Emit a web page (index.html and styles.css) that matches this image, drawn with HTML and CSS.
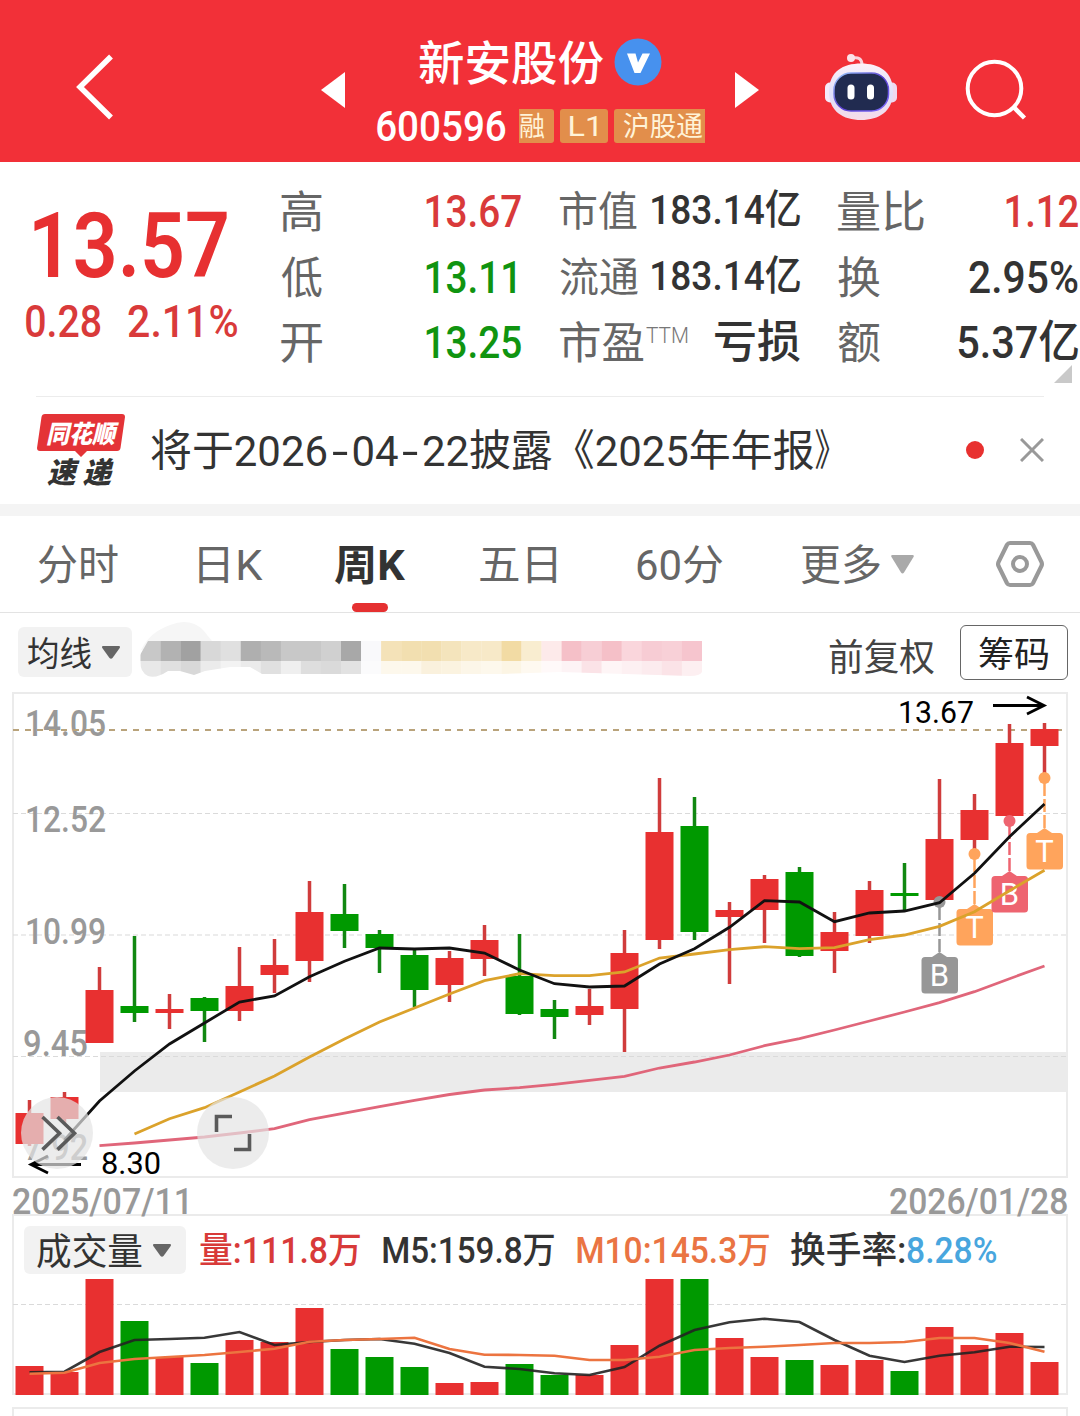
FILE: index.html
```html
<!DOCTYPE html>
<html lang="zh-CN">
<head>
<meta charset="utf-8">
<title>新安股份 600596</title>
<link rel="stylesheet" href="styles.css">
</head>
<body>
<header class="topbar">
  <svg class="back" width="44" height="72" viewBox="0 0 44 72"><path d="M37 5.500 6 36 37 66.500" fill="none" stroke="#fff" stroke-width="5.5"/></svg>
  <svg class="prev" width="24" height="36" viewBox="0 0 24 36"><path d="M24 0v36L0 18z" fill="#fff"/></svg>
  <div class="stock">
    <div class="stock-name">
      <span class="fit" data-w="184">新安股份</span>
      <svg class="verified" width="48" height="48" viewBox="0 0 48 48"><circle cx="24" cy="24" r="23.5" fill="#4791ee"/><path d="M13 15.500h8.500l2.500 9 4.500-9H36L26.500 35h-6z" fill="#fff"/></svg>
    </div>
    <div class="stock-code">
      <span class="fit code" data-w="129">600596</span>
      <span class="tag tag-first"><span class="fit" data-w="25">融</span></span>
      <span class="tag tag-l1"><span class="fit" data-w="27">L1</span></span>
      <span class="tag tag-last"><span class="fit" data-w="79">沪股通</span></span>
    </div>
  </div>
  <svg class="next" width="24" height="36" viewBox="0 0 24 36"><path d="M0 0v36l24-18z" fill="#fff"/></svg>
  <svg class="robot" width="76" height="70" viewBox="823 52 76 70">
    <defs>
      <linearGradient id="shell" x1="0" y1="0" x2="0" y2="1"><stop offset="0" stop-color="#fdf1f8"/><stop offset=".55" stop-color="#dfe0fb"/><stop offset="1" stop-color="#f7dbe8"/></linearGradient>
      <linearGradient id="rim" x1="0" y1="0" x2="1" y2="1"><stop offset="0" stop-color="#9fd0ff"/><stop offset=".5" stop-color="#5a3fd0"/><stop offset="1" stop-color="#7d6bff"/></linearGradient>
    </defs>
    <path d="M852 58q10-2 10 7" fill="none" stroke="#f9d3dc" stroke-width="3"/>
    <circle cx="851" cy="58" r="4" fill="#fbe3e9"/>
    <rect x="825" y="82.500" width="11" height="20" rx="5" fill="#f5eafa"/>
    <rect x="886" y="82.500" width="11" height="20" rx="5" fill="#efd9ef"/>
    <path d="M861 63.500c18 0 32 8 32 28s-14 28.500-32 28.500-32-8.500-32-28.500 14-28 32-28z" fill="url(#shell)"/>
    <rect x="834" y="73" width="54.500" height="38" rx="17" fill="#212b50" stroke="url(#rim)" stroke-width="1.500"/>
    <rect x="847.500" y="84.500" width="7" height="15" rx="3.500" fill="#fff"/>
    <rect x="867" y="84.500" width="7" height="15" rx="3.500" fill="#fff"/>
  </svg>
  <svg class="search" width="64" height="64" viewBox="964 58 64 64"><circle cx="994.500" cy="88.500" r="26.800" fill="none" stroke="#fff" stroke-width="4"/><path d="M1014 107.500l10.500 10.500" stroke="#fff" stroke-width="4.500"/></svg>
</header>

<section class="quote">
  <div class="price">
    <span class="fit last" data-w="193">13.57</span>
    <div class="change"><span class="fit" data-w="75">0.28</span><span class="fit" data-w="109">2.11%</span></div>
  </div>
  <div class="stats">
    <div><span class="fit label" data-w="41">高</span><span class="fit num up" data-w="95">13.67</span></div>
    <div><span class="fit label" data-w="41">低</span><span class="fit num down low" data-w="89">13.11</span></div>
    <div><span class="fit label" data-w="41">开</span><span class="fit num down" data-w="95">13.25</span></div>
  </div>
  <div class="stats">
    <div class="compact"><span class="fit label" data-w="77">市值</span><span class="fit num" data-w="148">183.14亿</span></div>
    <div class="compact"><span class="fit label" data-w="78">流通</span><span class="fit num" data-w="148">183.14亿</span></div>
    <div><span class="fit label" data-w="84">市盈</span><span class="fit ttm" data-w="42">TTM</span><span class="fit num" data-w="85">亏损</span></div>
  </div>
  <div class="stats">
    <div><span class="fit label" data-w="86">量比</span><span class="fit num up" data-w="72">1.12</span></div>
    <div><span class="fit label" data-w="42">换</span><span class="fit num" data-w="109">2.95%</span></div>
    <div><span class="fit label" data-w="42">额</span><span class="fit num" data-w="120">5.37亿</span></div>
    <svg class="corner" width="18" height="18" viewBox="0 0 18 18"><path d="M18 0v18H0z" fill="#c9c9c9"/></svg>
  </div>
</section>

<section class="news">
  <div class="news-logo">
    <svg class="logo-bg" width="88" height="44" viewBox="0 0 88 44"><path d="M8 0h77q3 0 3 3l-4.500 31q-.5 3-3.500 3H50l-6 6-6-6H3q-3 0-3-3L4.500 3q.5-3 3.500-3z" fill="#e43337"/></svg>
    <span class="fit logo-top" data-w="68">同花顺</span>
    <span class="fit logo-bottom" data-w="64">速 递</span>
  </div>
  <span class="fit news-text" data-w="684">将于2026<i>-</i>04<i>-</i>22披露《2025年年报<b>》</b></span>
  <span class="dot"></span>
  <svg class="close" width="24" height="24" viewBox="0 0 24 24"><path d="M1 1l22 22M23 1 1 23" stroke="#999" stroke-width="3"/></svg>
</section>

<nav class="tabs">
  <span class="fit t1" data-w="80">分时</span>
  <span class="fit t2" data-w="64">日K</span>
  <span class="tab-active t3"><span class="fit" data-w="71">周K</span></span>
  <span class="fit t4" data-w="76">五日</span>
  <span class="fit t5" data-w="86">60分</span>
  <span class="fit t6" data-w="79">更多</span>
  <svg class="more" width="23" height="19" viewBox="0 0 23 19"><path d="M1.500 0h20q2 0 1 2L13 17.500q-1.500 2-3 0L.5 2q-1-2 1-2z" fill="#a9a9a9"/></svg>
  <svg class="setting" width="50" height="48" viewBox="0 0 50 48"><path d="M15 3h20q2 0 3 1.700L46.500 22q.8 2 0 4L38 43.300Q37 45 35 45H15q-2 0-3-1.700L3.500 26q-.8-2 0-4L12 4.700Q13 3 15 3z" fill="none" stroke="#999" stroke-width="4.200"/><circle cx="25" cy="24" r="7" fill="none" stroke="#999" stroke-width="4"/></svg>
</nav>

<section class="tools">
  <div class="select ma"><span class="fit" data-w="63">均线</span><svg width="18" height="13" viewBox="0 0 18 13"><path d="M1 0h16q1.500.3.700 2l-7.200 10q-1.500 1.500-3 0L.3 2Q-.5.3 1 0z" fill="#666"/></svg></div>
  <svg class="mosaic" id="mosaic" width="570" height="62" viewBox="136 618 570 62"></svg>
  <span class="fit adjust" data-w="105">前复权</span>
  <div class="chips"><span class="fit" data-w="69">筹码</span></div>
</section>

<svg class="kline" id="kline" width="1080" height="500" viewBox="0 684 1080 500"></svg>

<div class="dates"><span class="fit" data-w="174">2025/07/11</span><span class="fit" data-w="177">2026/01/28</span></div>

<section class="volume">
  <div class="legend">
    <div class="select vol"><span class="fit" data-w="105">成交量</span><svg width="18" height="13" viewBox="0 0 18 13"><path d="M1 0h16q1.500.3.700 2l-7.200 10q-1.500 1.500-3 0L.3 2Q-.5.3 1 0z" fill="#666"/></svg></div>
    <span class="fit v1" data-w="160">量:111.8万</span>
    <span class="fit v2" data-w="171">M5:159.8万</span>
    <span class="fit v3" data-w="192">M10:145.3万</span>
    <span class="fit v4" data-w="114">换手率:</span>
    <span class="fit v5" data-w="89">8.28%</span>
  </div>
  <svg class="bars" id="bars" width="1054" height="120" viewBox="13 1276 1054 120"></svg>
</section>
<section class="next-panel"></section>
<script src="app.js"></script>
</body>
</html>
```
FILE: styles.css
```css
* { box-sizing: border-box; }
body {
  margin: 0;
  width: 1080px;
  height: 1416px;
  overflow: hidden;
  background: #fff;
  color: #333;
  font-family: Roboto, "Noto Sans CJK SC", sans-serif;
}
svg { display: block; flex: none; }
.fit { display: block; flex: none; white-space: nowrap; }
.fit > span { display: inline-block; transform-origin: 0 50%; }

.topbar { display: flex; align-items: flex-start; height: 162px; background: #f23038; color: #fff; }
.back { margin: 51px 0 0 74px; }
.prev { margin: 72px 0 0 203px; }
.stock { width: 329px; margin: 38px 0 0 31px; }
.stock-name { display: flex; height: 71px; padding-left: 43px; font-size: 47px; line-height: 52px; font-weight: 500; }
.verified { margin-left: 11px; }
.stock-code { display: flex; height: 34px; line-height: 36px; }
.code { font-size: 42px; font-weight: 500; margin: 0 12.500px 0 1px; }
.tag { display: block; height: 34px; background: #e28e4b; color: #fff3d8; font-size: 27px; line-height: 36px; border-radius: 3px; }
.tag-first { width: 35px; padding-left: 1px; margin-right: 6.500px; border-radius: 0 3px 3px 0; }
.tag-l1 { width: 48px; padding-left: 10px; margin-right: 6px; }
.tag-last { width: 91px; padding-left: 10px; border-radius: 3px 0 0 3px; }
.next { margin: 72px 0 0 30px; }
.robot { margin: 52px 0 0 64px; }
.search { margin: 58px 0 0 65px; }

.quote { display: flex; height: 234px; padding-top: 16px; }
.price { flex: none; width: 281px; padding: 35px 0 0 34px; color: #e73031; }
.last { font-size: 90px; line-height: 68px; font-weight: 600; }
.change { display: flex; gap: 27px; margin: 19px 0 0 -8px; font-size: 44.500px; line-height: 44px; font-weight: 500; color: #d93a3a; }
.stats { flex: none; width: 240px; margin-right: 38.500px; }
.stats:last-child { margin-right: 0; }
.stats > div { display: flex; justify-content: space-between; height: 65.500px; line-height: 67px; }
.label { font-size: 44px; color: #666; font-weight: 400; line-height: 70px; }
.num { font-size: 45px; font-weight: 500; }
.stats > .compact { line-height: 65px; }
.compact .label { font-size: 41px; line-height: 68px; }
.compact .num { font-size: 41px; }
.low { margin-right: 6px; }
.ttm { font-size: 22px; line-height: 54px; color: #777; font-weight: 300; margin-right: 24px; }
.up { color: #d93a3a; }
.down { color: #109410; }
.corner { margin: -10px 0 0 216px; }

.news { display: flex; align-items: flex-start; height: 120px; border-bottom: 12px solid #f4f4f4; background: linear-gradient(#ececec, #ececec) 36px 0 / 1008px 1px no-repeat; }
.news-logo { position: relative; width: 88px; height: 76px; margin: 18px 0 0 37px; font-weight: 900; font-style: italic; }
.logo-bg { position: absolute; left: 0; top: 0; }
.logo-top { position: relative; margin-left: 10px; font-size: 25px; line-height: 41px; color: #fff; }
.logo-bottom { margin: 0 0 0 10px; font-size: 29px; line-height: 36px; }
.news-text { margin: 28px 0 0 26px; font-size: 43px; line-height: 55px; font-weight: 400; }
.news-text i { display: inline-block; width: 24px; text-align: center; font-style: normal; transform: scaleX(1.400); }
.news-text b { display: inline-block; font-weight: 400; transform: scaleX(.750); transform-origin: 0 50%; }
.dot { width: 18px; height: 18px; margin: 45px 0 0 131px; border-radius: 50%; background: #e8302f; }
.close { margin: 42px 0 0 36px; }

.tabs { display: flex; align-items: flex-start; height: 97px; border-bottom: 1px solid #e3e3e3; color: #666; font-size: 42px; line-height: 100px; }
.t1 { margin-left: 37.500px; }
.t2 { margin-left: 81.500px; }
.t3 { margin-left: 71px; }
.t4 { margin-left: 75px; }
.t5 { margin-left: 81px; }
.t6 { margin-left: 78px; }
.tab-active { position: relative; color: #333; font-weight: 700; }
.tab-active::after { content: ""; position: absolute; left: 18px; top: 87px; width: 36px; height: 9px; border-radius: 5px; background: #e53031; }
.more { margin: 39px 0 0 11px; }
.setting { margin: 24px 0 0 81px; }

.tools { display: flex; align-items: flex-start; height: 71px; }
.select { display: flex; align-items: center; background: #f2f2f2; border-radius: 6px; color: #333; }
.ma { width: 114px; height: 50px; margin: 14px 0 0 18px; padding-left: 10px; gap: 10.500px; font-size: 34px; line-height: 52px; }
.select .fit { position: relative; top: 2px; }
.mosaic { margin: 5px 0 0 4px; }
.adjust { margin: 16px 0 0 123px; font-size: 37px; line-height: 60px; color: #444; }
.chips { width: 108px; height: 55px; margin: 12px 0 0 26px; padding-left: 18px; border: 1.500px solid #666; border-radius: 6px; font-size: 35px; line-height: 59px; color: #222; }

.kline text { font-family: Roboto, sans-serif; }
.axis { font-size: 36px; font-weight: 500; fill: #999; }
.extreme { font-size: 31px; fill: #000; }
.mark { font-size: 31px; fill: #fff; text-anchor: middle; }

.dates { display: flex; justify-content: space-between; height: 30px; padding: 1px 13px 0; font-size: 36px; line-height: 35px; font-weight: 500; color: #999; }
.volume { width: 1056px; height: 181px; margin-left: 12px; border: 2px solid #ebebeb; }
.legend { display: flex; height: 60px; padding-top: 10px; font-size: 36px; line-height: 51px; font-weight: 500; }
.vol { width: 162px; height: 48px; margin-left: 10px; padding-left: 13px; gap: 10.500px; font-size: 37px; font-weight: 400; }
.v1 { margin-left: 14px; color: #d83a39; }
.v2 { margin-left: 23px; }
.v3 { margin-left: 23px; color: #ea7443; }
.v4 { margin-left: 22px; }
.v5 { margin-left: 2px; color: #48a6de; }
.bars { margin-left: -1px; }
.next-panel { width: 1056px; height: 30px; margin: 12px 0 0 12px; border: 2px solid #ebebeb; }
```
FILE: app.js
```js
var ctx = document.createElement('canvas').getContext('2d');
document.querySelectorAll('.fit').forEach(function (el) {
  var width = parseFloat(el.dataset.w);
  var inner = document.createElement('span');
  while (el.firstChild) inner.appendChild(el.firstChild);
  el.appendChild(inner);
  var cs = getComputedStyle(el), text = inner.textContent;
  ctx.font = cs.fontWeight + ' ' + cs.fontSize + ' ' + cs.fontFamily;
  var first = ctx.measureText(text[0]), last = ctx.measureText(text[text.length - 1]);
  var left = -first.actualBoundingBoxLeft;
  var right = last.width - last.actualBoundingBoxRight;
  var scale = width / (inner.getBoundingClientRect().width - left - right);
  el.style.width = width + 'px';
  inner.style.transform = 'translateX(' + (-left * scale) + 'px) scaleX(' + scale + ')';
});

var RED = '#e83030', GREEN = '#009900';
function cx(i) { return 29.5 + 35 * i; }
function rect(x, y, w, h, fill) {
  return '<rect x="' + x + '" y="' + y + '" width="' + w + '" height="' + h + '" fill="' + fill + '"/>';
}
function line(values, start, color, width) {
  var pts = values.map(function (y, k) { return cx(k + start) + ',' + y; }).join(' ');
  return '<polyline points="' + pts + '" fill="none" stroke="' + color + '" stroke-width="' + width + '"/>';
}
function dashed(y, x2, color, width, dash) {
  return '<path d="M13 ' + y + 'H' + x2 + '" stroke="' + color + '" stroke-width="' + width + '" stroke-dasharray="' + dash + '"/>';
}
function label(cls, x, y, w, s) {
  return '<text class="' + cls + '" x="' + x + '" y="' + y + '" textLength="' + w + '" lengthAdjust="spacingAndGlyphs">' + s + '</text>';
}

// Weekly candles: direction, high, body top, body bottom, low
var candles = [
  [1,1100,1113,1144,1146],[1,1092,1097,1119,1123],[1,967,990,1043,1043],[0,936,1006,1013,1022],[1,994,1009,1013,1029],
  [0,997,998,1011,1042],[1,947,986,1011,1021],[1,939,965,975,993],[1,881,912,961,982],[0,884,914,931,948],
  [0,930,934,948,973],[0,949,955,990,1007],[1,951,958,985,1002],[1,925,940,959,976],[0,934,976,1014,1015],
  [0,1000,1009,1017,1039],[1,989,1006,1015,1025],[1,930,953,1009,1052],[1,778,832,940,949],[0,797,826,932,940],
  [1,902,910,917,984],[1,875,879,910,943],[0,867,872,956,957],[1,912,932,951,973],[1,881,890,936,943],
  [0,863,893,896,910],[1,779,839,900,900],[1,794,810,840,854],[1,724,743,816,821],[1,723,729,746,777]
];
var ma5 = [1140,1101,1071,1044,1023,1002,996,976.7,961.3,948,949,948,953,970,983.7,987,986,964,948.7,927.3,900.7,902,921.7,913,911,902.7,873.3,836.7,804];
var ma10 = [1134,1118.7,1107.7,1092,1076,1057,1039,1022,1008,994,980.7,973.7,975.7,975.7,972,958,954,949.7,946.7,948.7,947.7,939.7,935,926.3,911.7,890.7,870.3];
var ma20 = [1145.7,1143,1140,1137,1133,1128.7,1119.7,1113,1106.7,1100.3,1094.5,1090,1087.7,1084.3,1080.3,1076.3,1068,1062,1055,1045.7,1038.7,1030,1021,1012,1002.7,991.7,978.7,966];
// Trade markers: candle index, anchor, tag top, colour, letter
var marks = [[26,902,957,'#979797','B'],[27,854,909,'#ffa45c','T'],[28,821,876,'#ee6470','B'],[29,778,833,'#ffa45c','T']];

var k = rect(100, 1052, 968, 40, '#ebebeb');
k += '<rect x="13" y="693" width="1054" height="484" fill="none" stroke="#ebebeb" stroke-width="2"/>';
[813.5, 935, 1056.5].forEach(function (y) { k += dashed(y, 1067, '#dadada', 1.2, '5 3'); });
k += label('axis', 25, 735.5, 81, '14.05') + label('axis', 25, 831.5, 81, '12.52') + label('axis', 25, 943.5, 81, '10.99') +
     label('axis', 23, 1056, 65, '9.45') + label('axis', 24, 1160, 64, '7.92');
k += dashed(730, 1062, '#b9a37b', 1.8, '6 6');
candles.forEach(function (c, i) {
  var color = c[0] ? RED : GREEN, x = cx(i);
  k += rect(x - 1.75, c[1], 3.5, c[4] - c[1], c[0] ? '#d03c3c' : '#118811') + rect(x - 14, c[2], 28, c[3] - c[2], color);
});
marks.forEach(function (m) {
  var x = cx(m[0]), t = m[2];
  k += '<circle cx="' + x + '" cy="' + m[1] + '" r="6" fill="' + m[3] + '"/>';
  k += '<path d="M' + x + ' ' + (m[1] + 5) + 'V' + (t - 5) + '" stroke="' + m[3] + '" stroke-width="2.5" stroke-dasharray="13 3"/>';
  k += '<path d="M' + (x - 9) + ' ' + (t + 1) + 'l9-6 9 6z" fill="' + m[3] + '"/>';
  k += '<rect x="' + (x - 18) + '" y="' + t + '" width="36.5" height="36.5" rx="3.5" fill="' + m[3] + '"/>';
  k += '<text class="mark" x="' + x + '" y="' + (t + 29) + '">' + m[4] + '</text>';
});
k += line(ma20, 2, '#e0667a', 2.8) + line(ma10, 3, '#dba22b', 2.8) + line(ma5, 1, '#111', 2.8);
k += label('extreme', 898, 723, 76, '13.67') + '<path d="M993 705.500H1044M1027 697l17 8.500-17 8.500" fill="none" stroke="#000" stroke-width="2.8"/>';
k += label('extreme', 101, 1174, 60, '8.30') + '<path d="M81 1164.500H31M48 1156l-17 8.500 17 8.500" fill="none" stroke="#000" stroke-width="2.8"/>';
k += '<circle cx="57" cy="1133" r="36" fill="#e4e4e4" fill-opacity=".7"/><circle cx="233" cy="1133" r="36" fill="#e4e4e4" fill-opacity=".7"/>';
k += '<path d="M42.500 1117l17 16.300-17 16.300M57.500 1117l17 16.300-17 16.300M216.500 1132v-15.500H232M234 1149.500h15.500V1134" fill="none" stroke="#5a5a5a" stroke-width="3.6"/>';
document.getElementById('kline').innerHTML = k;

// Weekly volume: top edge of each bar, with its 5 and 10 week averages
var tops = [1366,1372,1279,1321,1357,1363,1340,1342,1308,1349,1357,1367,1383,1382,1364,1375,1375,1345,1279,1279,1338,1357,1360,1365,1360,1371,1327,1345,1333,1362];
var v5 = [1372.3,1371.7,1352,1340,1339,1337.7,1332,1345,1342,1340,1339,1343.7,1353,1366.7,1369,1373.3,1375,1367,1345.7,1330,1322.3,1318.7,1322,1340,1355.7,1362,1355.7,1352.3,1346.7,1347];
var v10 = [1373.7,1372.7,1363,1359,1357,1355,1352,1348.7,1341.7,1340,1339,1337.7,1349,1354.7,1355,1355.7,1360,1360,1356.7,1350,1348,1346.7,1345,1343,1343,1342,1338,1338,1343,1351.7];
var v = dashed(1304.5, 1067, '#dadada', 1.2, '5 3');
tops.forEach(function (t, i) { v += rect(cx(i) - 14, t, 28, 1395 - t, candles[i][0] ? RED : GREEN); });
v += '<g opacity=".9">' + line(v5, 0, '#222', 2.6) + '</g>' + line(v10, 0, '#ec7440', 2.6);
document.getElementById('bars').innerHTML = v;

// Masked average values: one strip of 20px blocks and a paler one beneath
var strip = ['c8c8c8','b2b2b2','a1a1a1','d8d8d8','e0e0e0','afafaf','b9b9b9','c8c8c8','c8c8c8','d0d0d0','a8a8a8','f9f9fb',
  'f4e2b8','f2dfb0','f2dfb0','f4e4bc','f7e9c8','f7e9c8','f2dba4','f9edd0','fdeaea','f5c0c8','f7ced5','f5c0c8','fad6dc','f7ccd4','f8d0d7','f6c5ce'];
var under = ['e8e8e8','e0e0e0','d8d8d8','ebebeb','f3f3f3','ebebeb','e0e0e0','efefef','dedede','dadada','e2e2e2','fbfbfc',
  'fdf8ec','fdf8ec','faf1dd','fbf3e0','fcf6e8','fdf8ec','fcf5e4','fef9f0','fff9f9','fdf3f5','fbe3e7','fef5f6','fdf0f2','fcebee','fbe3e7','fdeff1'];
var m = '<defs><clipPath id="brush"><path d="M140 661L140 655 148 641H702V672Q700 676 690 676L560 672 500 674 380 674 361 674H262L250 667H230L205 671 194 675 180 671H168Q156 679 148 676 140 672 140 661Z"/></clipPath></defs>';
m += '<path d="M141 650Q150 632 170 625 190 617 203 630L212 641V650Z" fill="#f6f6f6"/><g clip-path="url(#brush)">';
strip.forEach(function (c, i) {
  m += rect(140.5 + 20.05 * i, 641, 20.3, 20, '#' + c) + rect(140.5 + 20.05 * i, 661, 20.3, 16, '#' + under[i]);
});
document.getElementById('mosaic').innerHTML = m + '</g>';
```
